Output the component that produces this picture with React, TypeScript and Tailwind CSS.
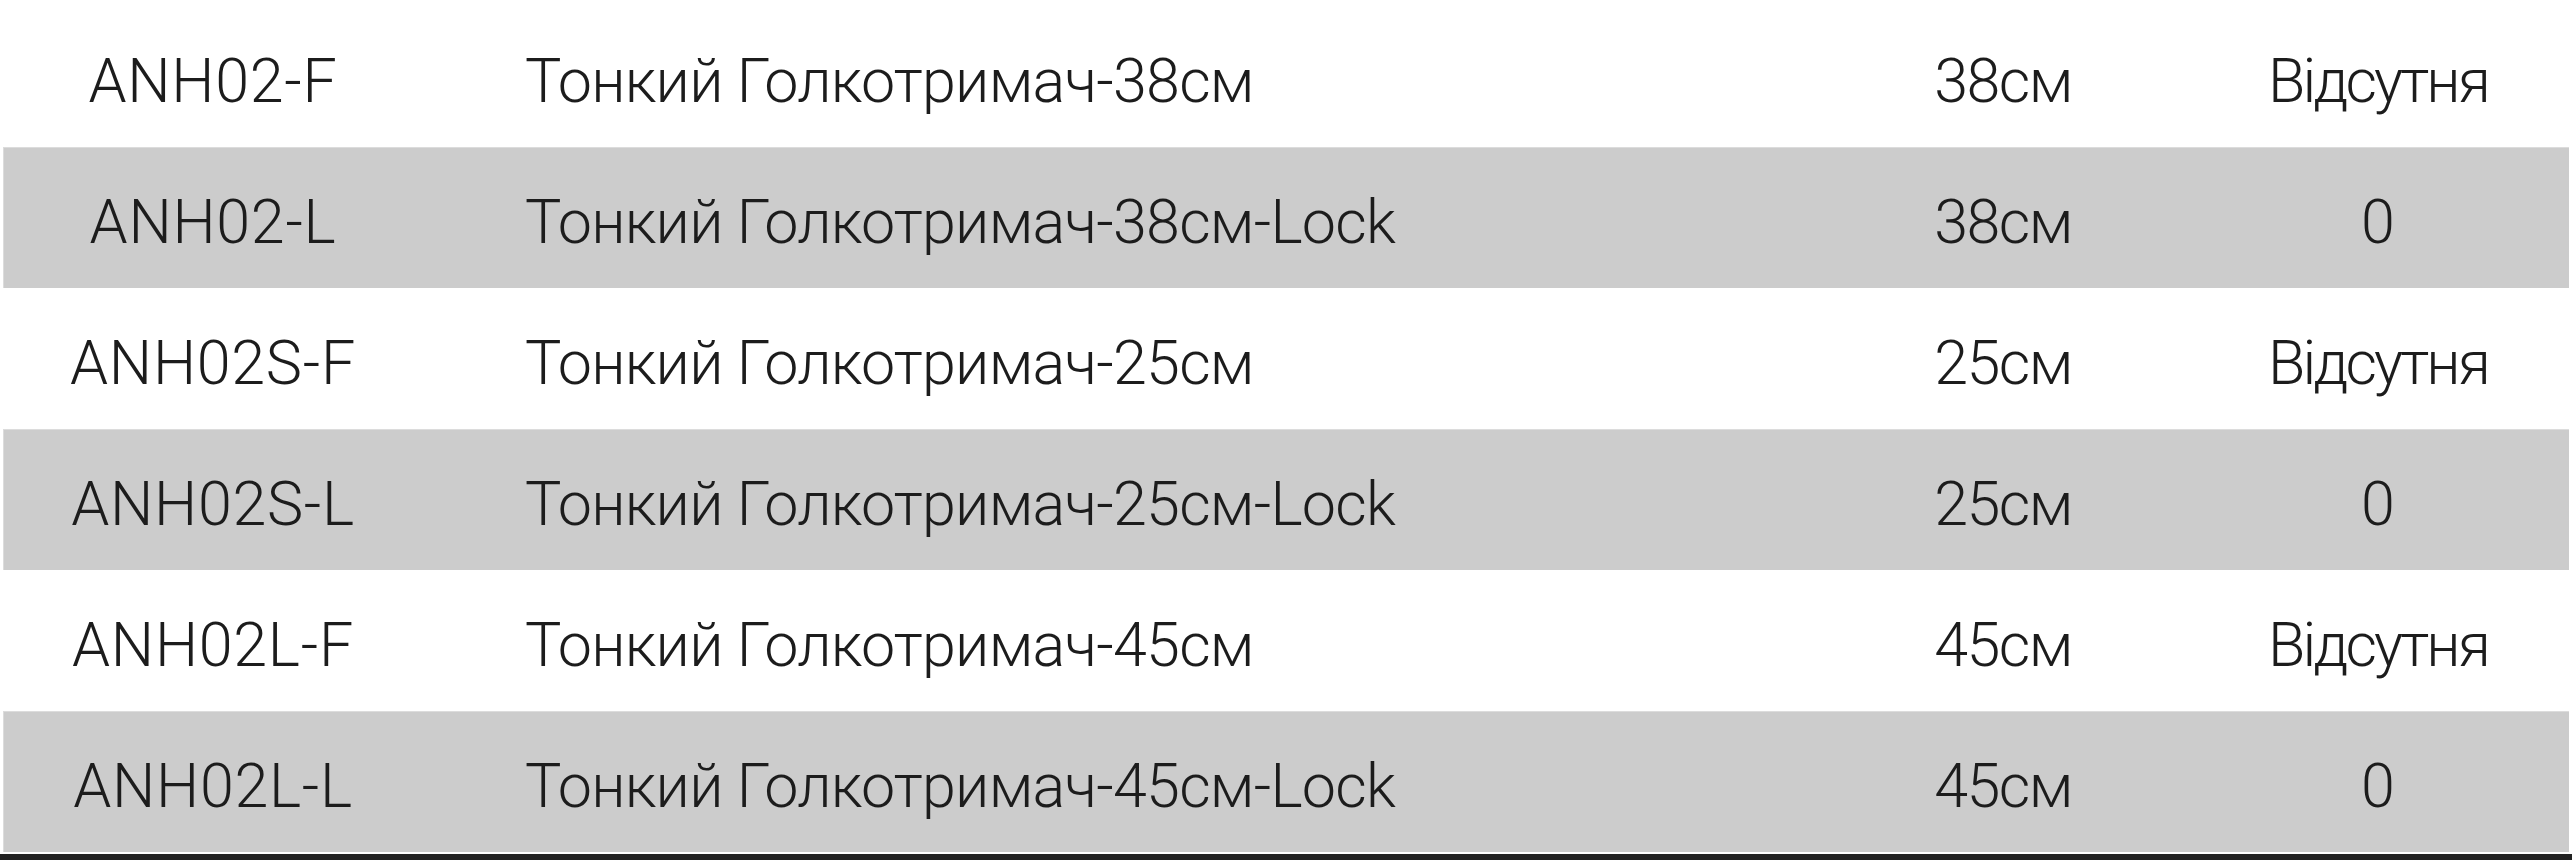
const rows = [
  { code: 'ANH02-F', name: 'Тонкий Голкотримач-38см', size: '38см', stock: 'Відсутня' },
  { code: 'ANH02-L', name: 'Тонкий Голкотримач-38см-Lock', size: '38см', stock: '0' },
  { code: 'ANH02S-F', name: 'Тонкий Голкотримач-25см', size: '25см', stock: 'Відсутня' },
  { code: 'ANH02S-L', name: 'Тонкий Голкотримач-25см-Lock', size: '25см', stock: '0' },
  { code: 'ANH02L-F', name: 'Тонкий Голкотримач-45см', size: '45см', stock: 'Відсутня' },
  { code: 'ANH02L-L', name: 'Тонкий Голкотримач-45см-Lock', size: '45см', stock: '0' },
];

export default function App() {
  return (
    <div className="w-[2572px] h-[860px] bg-white font-['Roboto',_'Liberation_Sans',_sans-serif] font-light text-[61px] text-[#1c1c1c] flex flex-col">
      <div className="flex flex-col px-[3px] pt-[6px]">
        {rows.map((r, i) => (
          <div
            key={r.code}
            className={
              i % 2 === 1
                ? 'grid grid-cols-[418px_1397px_368px_382px] items-center h-[141px] pt-[9px] bg-[#cccccc] border-t border-l border-[#dcdcdc]'
                : 'grid grid-cols-[418px_1397px_368px_382px] items-center h-[141px] pt-[9px] bg-white border-t border-l border-white'
            }
          >
            <div className="text-center whitespace-nowrap tracking-[0.7px]">{r.code}</div>
            <div className="pl-[103px] whitespace-nowrap tracking-[-0.75px]">{r.name}</div>
            <div className="text-center whitespace-nowrap tracking-[-1.5px]">{r.size}</div>
            <div className={r.stock === '0' ? 'text-center whitespace-nowrap' : 'text-center whitespace-nowrap tracking-[-2.9px]'}>
              {r.stock}
            </div>
          </div>
        ))}
      </div>
      <div className="mt-[2px] h-[6px] bg-[#222222]" />
    </div>
  );
}
